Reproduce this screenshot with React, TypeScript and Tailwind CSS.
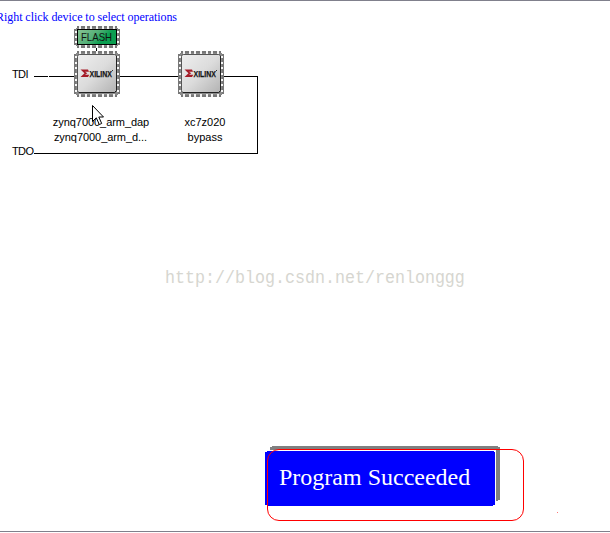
import type { ReactNode } from "react";

const steps = (n: number) => Array.from({ length: n }, (_, i) => i);

function Pins({ w, h, nx, ny }: { w: number; h: number; nx: number; ny: number }) {
  const px = (w - 6) / nx;
  const py = (h - 6) / ny;
  return (
    <g shapeRendering="crispEdges">
      <rect x="3" y="0" width={w - 6} height={h} fill="#777" />
      <rect x="0" y="3" width={w} height={h - 6} fill="#777" />
      <rect x="2" y="2" width={w - 4} height={h - 4} fill="#8a8a8a" />
      {steps(nx).map((i) => {
        const x = Math.round(3 + i * px + px / 2 - 1);
        return (
          <g key={i} fill="#f4f4f4">
            <rect x={x} y="0" width="2" height="3" />
            <rect x={x} y={h - 3} width="2" height="3" />
          </g>
        );
      })}
      {steps(ny).map((i) => {
        const y = Math.round(3 + i * py + py / 2 - 1);
        return (
          <g key={i} fill="#f8f8f8">
            <rect x="1" y={y} width="2" height="2" />
            <rect x={w - 3} y={y} width="2" height="2" />
          </g>
        );
      })}
    </g>
  );
}

function Chip() {
  return (
    <svg width="46" height="46" viewBox="0 0 46 46" className="block shrink-0">
      <defs>
        <linearGradient id="metal" x1="0" y1="0" x2="1" y2="1">
          <stop offset="0" stopColor="#eeeeee" />
          <stop offset="0.5" stopColor="#dcdcdc" />
          <stop offset="1" stopColor="#b2b2b2" />
        </linearGradient>
      </defs>
      <Pins w={46} h={46} nx={7} ny={7} />
      <rect x="3.5" y="3.5" width="39" height="38" rx="2" fill="url(#metal)" stroke="#555" />
      <path d="M5 41.5H40.5L42.5 39.5V5" fill="none" stroke="#222" />
      <path d="M6.5 18.5H14L15 20.8H11L13.3 22.3L11 23.8H15.3L14 26H6.5L10.5 22.3Z" fill="#a51c28" />
      <text x="15.5" y="25.5" textLength="22.5" lengthAdjust="spacingAndGlyphs" fontFamily="Liberation Sans, sans-serif" fontWeight="bold" fontSize="9" fill="#151515" stroke="#151515" strokeWidth="0.25">
        XILINX
      </text>
      <rect x="38" y="19" width="1" height="1" fill="#333" />
    </svg>
  );
}

function Flash() {
  return (
    <svg width="46" height="22" viewBox="0 0 46 22" className="block shrink-0">
      <defs>
        <linearGradient id="flash" x1="0" y1="0" x2="1" y2="0.4">
          <stop offset="0" stopColor="#8ac596" />
          <stop offset="0.5" stopColor="#55b078" />
          <stop offset="0.8" stopColor="#0b9e50" />
          <stop offset="1" stopColor="#0b9e50" />
        </linearGradient>
      </defs>
      <Pins w={46} h={22} nx={7} ny={3} />
      <rect x="3.5" y="3.5" width="39" height="15" fill="url(#flash)" stroke="#000" />
      <text x="7" y="15" textLength="31" lengthAdjust="spacingAndGlyphs" fontFamily="Liberation Sans, sans-serif" fontSize="11" fill="#111">
        FLASH
      </text>
    </svg>
  );
}

function Device({ flash, children }: { flash?: boolean; children: ReactNode }) {
  return (
    <div className="flex w-[104px] flex-col items-center">
      <div className="h-[25px] shrink-0">{flash && <Flash />}</div>
      <Chip />
      <div className="pt-[18px] text-center">{children}</div>
    </div>
  );
}

function JtagChain() {
  return (
    <section className="relative h-[140px] pt-px font-['Liberation_Sans',sans-serif] text-[11px] leading-[15px] text-black">
      <svg width="610" height="140" viewBox="0 25 610 140" className="absolute inset-0" shapeRendering="crispEdges">
        <path d="M34 76.5H48M49 76.5H75M119 76.5H179M223 76.5H257.5V153.5H34M96.5 47V52" fill="none" stroke="#000" />
      </svg>
      <div className="relative flex">
        <div className="flex w-[45px] flex-col gap-[62px] pl-3 pt-[41px] tracking-[-0.6px]">
          <p>TDI</p>
          <p>TDO</p>
        </div>
        <Device flash>
          <p className="-mr-[8px] tracking-[-0.06px]">zynq7000_arm_dap</p>
          <p className="-mr-[7px] tracking-[-0.06px]">zynq7000_arm_d...</p>
        </Device>
        <Device>
          <p className="ml-[8px]">xc7z020</p>
          <p className="ml-[8px]">bypass</p>
        </Device>
      </div>
      <svg width="13" height="21" viewBox="0 0 13 21" className="absolute left-[92px] top-[80px]">
        <path d="M.5.5V16.5L4.3 12.8L7.3 19.5L9.7 18.5L6.8 12H11.5Z" fill="#fff" stroke="#000" />
      </svg>
    </section>
  );
}

function Notice() {
  return (
    <div className="relative h-[76px] w-[260px]">
      <svg width="260" height="76" viewBox="0 0 260 76" className="absolute inset-0" shapeRendering="crispEdges">
        <path d="M7 0H233V1H235V54H233V55H231V4H5V1H7Z" fill="#808080" />
        <path d="M2 5H229V6H230V59H228V60H2V59H0V6H2Z" fill="#0000ff" />
      </svg>
      <p className="relative whitespace-nowrap pl-[14px] pt-[17px] font-['Liberation_Serif',serif] text-[24px] leading-[28px] text-white">Program Succeeded</p>
      <div className="absolute left-[2px] top-[3px] h-[72px] w-[257px] rounded-[12px] border border-[#ff0000]" />
    </div>
  );
}

export default function App() {
  return (
    <main className="flex h-[533px] w-[610px] flex-col overflow-hidden bg-white">
      <div className="h-px shrink-0 bg-[#80808c]" />
      <h1 className="-ml-[4px] h-6 pt-[8px] font-['Liberation_Serif',serif] text-[12px] leading-[16px] tracking-[-0.05px] text-[#0000ff]">Right click device to select operations</h1>
      <JtagChain />
      <p className="mt-[100px] h-[26px] origin-center scale-y-[1.15] whitespace-nowrap pl-[165px] font-['Liberation_Mono',monospace] text-[16.67px] leading-[26px] text-[#d6d6d0]">http://blog.csdn.net/renlonggg</p>
      <div className="mt-[155px] flex gap-8 pl-[265px]">
        <Notice />
        <i className="mt-[66px] size-px bg-[#ff7777]" />
      </div>
      <div className="mt-[9px] h-px shrink-0 bg-[#80808c]" />
    </main>
  );
}
